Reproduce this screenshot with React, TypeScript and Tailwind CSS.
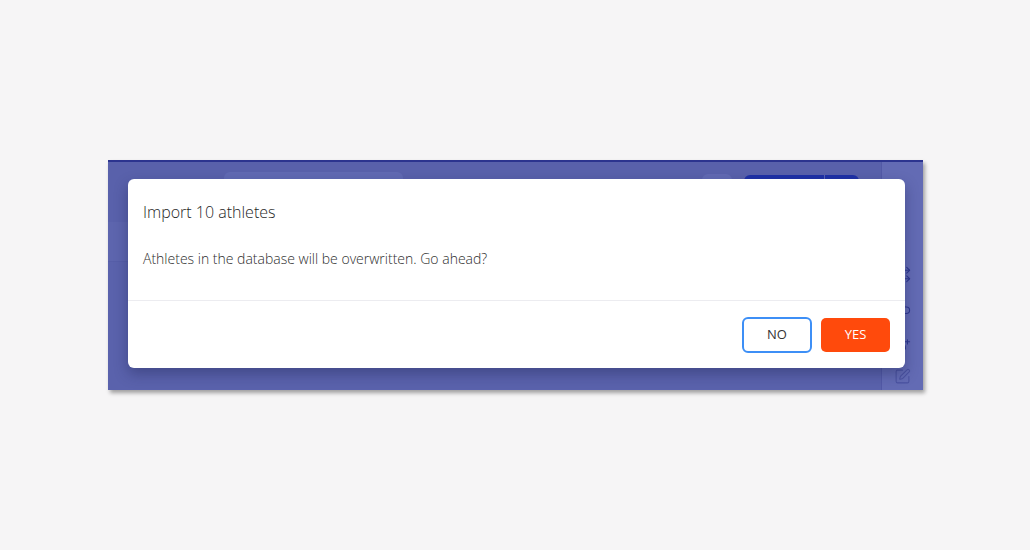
import React from "react";
import { ChevronRight, Cloud, UserPlus, SquarePen, Shuffle } from "lucide-react";

function BackgroundApp() {
  return (
    <div className="absolute inset-0 flex flex-row border-t-2 border-[#2c348f]">
      {/* main column */}
      <div className="flex-1 flex flex-col">
        <div className="h-[60px] bg-[#5961ab] flex flex-row items-start pt-[10px] pl-[116px] pr-[22px]">
          <div className="w-[179px] h-[36px] rounded-[6px] bg-[#616ab3]" />
          <div className="flex-1" />
          <div className="mt-[2px] w-[30px] h-[34px] rounded-[6px] bg-[#626ab3]" />
          <div className="ml-[12px] mt-[3px] flex flex-row h-[34px] rounded-[6px] overflow-hidden">
            <div className="w-[80px] bg-[#1f31a6]" />
            <div className="w-px bg-[#5963b5]" />
            <div className="w-[34px] bg-[#1f31a6]" />
          </div>
        </div>
        <div className="h-[40px] bg-[#5d65ae] border-b border-[#565ea8]" />
        <div className="flex-1 bg-[#5a62ac]" />
      </div>
      {/* side toolbar */}
      <div className="w-[42px] bg-[#636bb4] border-l border-[#5259a6] flex flex-col items-center pt-[70px] gap-[17px] text-[#2f3890]">
        <ChevronRight size={17} strokeWidth={1.5} />
        <Shuffle size={17} strokeWidth={1.5} />
        <Cloud size={17} strokeWidth={1.5} />
        <UserPlus size={17} strokeWidth={1.5} />
        <SquarePen size={17} strokeWidth={1.5} className="text-[#4a52a0]" />
      </div>
    </div>
  );
}

function ConfirmDialog() {
  return (
    <div className="absolute left-[20px] top-[19px] w-[777px] h-[189px] bg-white rounded-[6px] shadow-[0_6px_14px_rgba(20,25,70,0.35)] flex flex-col">
      <div className="h-[66px] flex items-center px-[15px]">
        <h2 className="text-[16px] leading-[26px] font-[350] text-[#1f1f1f]">Import 10 athletes</h2>
      </div>
      <div className="h-[55px] px-[15px] pt-[3px]">
        <p className="text-[14px] leading-[22px] font-[350] text-[#2e2e2e]">
          Athletes in the database will be overwritten. Go ahead?
        </p>
      </div>
      <div className="flex-1 border-t border-[#ececf0] flex flex-row items-center justify-end gap-[9px] px-[15px]">
        <button className="w-[70px] h-[36px] rounded-[6px] border-2 border-[#3d8ff6] bg-white text-[13px] text-[#333333]">
          NO
        </button>
        <button className="w-[69px] h-[34px] rounded-[5px] bg-[#ff4a0c] text-[13px] text-white">
          YES
        </button>
      </div>
    </div>
  );
}

export default function App() {
  return (
    <div
      className="w-[1030px] h-[550px] bg-[#f6f5f6] pt-[160px] pl-[108px]"
      style={{ fontFamily: '"Open Sans", "Noto Sans", sans-serif' }}>
      <div className="relative w-[815px] h-[230px] bg-[#5a62ac] shadow-[2px_3px_4px_rgba(0,0,0,0.35)]">
        <BackgroundApp />
        <ConfirmDialog />
      </div>
    </div>
  );
}
